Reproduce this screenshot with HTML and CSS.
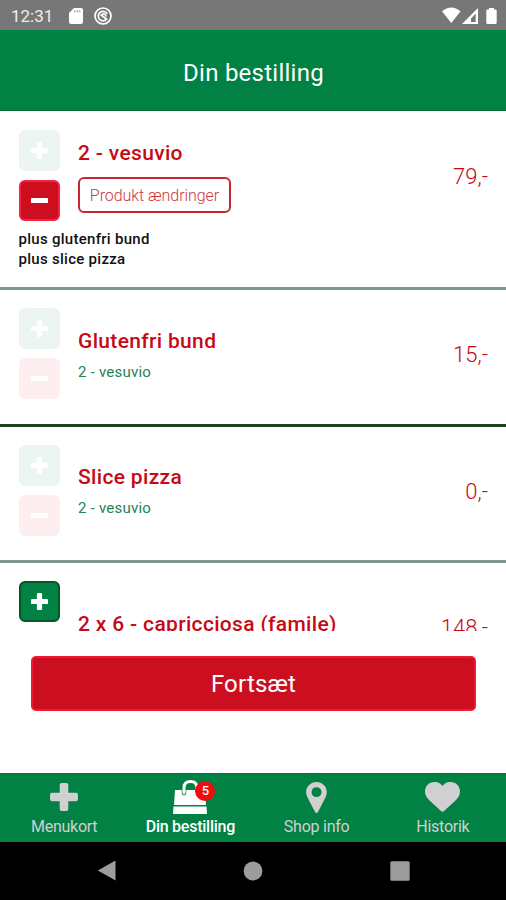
FILE: index.html
```html
<!DOCTYPE html>
<html lang="da">
<head>
<meta charset="utf-8">
<meta name="viewport" content="width=device-width, initial-scale=1">
<title>Din bestilling</title>
<link rel="stylesheet" href="styles.css">
</head>
<body>
<svg width="0" height="0" class="defs" aria-hidden="true">
  <symbol id="plus" viewBox="0 0 28 28"><path d="M11.700 0h4.600q2 0 2 2v7.700H26q2 0 2 2v4.600q0 2-2 2h-7.700V26q0 2-2 2h-4.600q-2 0-2-2v-7.700H2q-2 0-2-2v-4.600q0-2 2-2h7.700V2q0-2 2-2z"/></symbol>
  <symbol id="minus" viewBox="0 0 28 28"><rect y="9.700" width="28" height="8.600" rx="1.600"/></symbol>
</svg>
<div class="phone">
  <div class="status">
    <span class="clock">12:31</span>
    <svg class="sd" viewBox="0 0 14 16"><path d="M5 0h7q2 0 2 2v12q0 2-2 2H2q-2 0-2-2V5z"/><path class="slots" d="M5.800 2v2.500M8.300 2v2.500M10.800 2v2.500"/></svg>
    <svg class="radar" viewBox="0 0 18 18"><circle cx="9" cy="9" r="8"/><path d="M13 11.500A4.700 4.700 0 1 1 13.200 7M6.500 7.500l6.500 5M8 7q3.500-1 4 2.500"/></svg>
    <svg class="signals" viewBox="0 0 56 18"><path d="M0 4.300Q9.300-3.500 18.600 4.300L9.300 16z"/><path fill-rule="evenodd" d="M36 1v16H20zM33.700 6.500L29 11.500V15h4.700z"/><path d="M47 1h5v1.500h1.500q1.200 0 1.200 1.200v12q0 1.300-1.200 1.300h-8q-1.200 0-1.200-1.300v-12q0-1.200 1.200-1.200H47z"/></svg>
  </div>
  <header class="header"><h1>Din bestilling</h1></header>
  <main class="list">
    <article class="item tall">
      <div class="row">
        <div class="steps"><button class="step add off"><svg><use href="#plus"/></svg></button><button class="step sub"><svg><use href="#minus"/></svg></button></div>
        <div class="info"><h2>2 - vesuvio</h2><button class="change">Produkt ændringer</button></div>
        <span class="price">79,-</span>
      </div>
      <p class="extras">plus glutenfri bund<br>plus slice pizza</p>
    </article>
    <article class="item dark">
      <div class="row">
        <div class="steps"><button class="step add off"><svg><use href="#plus"/></svg></button><button class="step sub off"><svg><use href="#minus"/></svg></button></div>
        <div class="info"><h2>Glutenfri bund</h2><p class="parent">2 - vesuvio</p></div>
        <span class="price">15,-</span>
      </div>
    </article>
    <article class="item">
      <div class="row">
        <div class="steps"><button class="step add off"><svg><use href="#plus"/></svg></button><button class="step sub off"><svg><use href="#minus"/></svg></button></div>
        <div class="info"><h2>Slice pizza</h2><p class="parent">2 - vesuvio</p></div>
        <span class="price">0,-</span>
      </div>
    </article>
    <article class="item">
      <div class="row">
        <div class="steps"><button class="step add"><svg><use href="#plus"/></svg></button><button class="step sub"><svg><use href="#minus"/></svg></button></div>
        <div class="info single"><h2>2 x 6 - capricciosa (famile)</h2></div>
        <span class="price">148,-</span>
      </div>
    </article>
  </main>
  <div class="action"><button class="continue">Fortsæt</button></div>
  <nav class="tabs">
    <a class="tab"><span class="icon"><svg class="i-plus"><use href="#plus"/></svg></span><span>Menukort</span></a>
    <a class="tab active"><span class="icon"><svg class="i-bag" viewBox="0 0 36 36"><path d="M3 11h30l1 15H2zM1.500 27.500h33L35 35H1z"/><path class="gap" d="M10.200 11v3q0 2 1.800 2t1.800-2v-3"/><path class="handle" d="M12 14V9q0-6.500 6.500-6.500T25 9v5"/></svg><span class="badge">5</span></span><span>Din bestilling</span></a>
    <a class="tab"><span class="icon"><svg class="i-pin" viewBox="0 0 20 30"><path fill-rule="evenodd" d="M10 0C4.500 0 0 4.200 0 9.700c0 3 1.200 5.100 2.200 7L8.600 29q1.400 2 2.800 0l6.400-12.300c1-1.900 2.200-4 2.200-7C20 4.200 15.500 0 10 0zm0 5a4.800 4.800 0 1 1 0 9.600A4.800 4.800 0 0 1 10 5z"/></svg></span><span>Shop info</span></a>
    <a class="tab"><span class="icon"><svg class="i-heart" viewBox="0 0 35 30"><path d="M17.500 4C14.500 0 11.500 0 9.500 0 4 0 0 4 0 9.500c0 4 2 6.500 4.500 9L16 29q1.500 1.500 3 0l11.500-10.500c2.500-2.500 4.500-5 4.500-9C35 4 31 0 25.500 0c-2 0-5 0-8 4z"/></svg></span><span>Historik</span></a>
  </nav>
  <div class="system">
    <svg viewBox="0 0 20 22"><path d="M18.500.5v20L.8 10.500z"/></svg>
    <svg viewBox="0 0 20 22"><circle cx="10" cy="11" r="9.400"/></svg>
    <svg viewBox="0 0 20 22"><rect x=".3" y="1.300" width="19.400" height="19.400" rx="1.500"/></svg>
  </div>
</div>
</body>
</html>
```
FILE: styles.css
```css
* { box-sizing: border-box; }
body { margin: 0; font-family: Roboto, "Liberation Sans", sans-serif; background: #fff; }
h1, h2, p { margin: 0; font-weight: 500; }
button { font: inherit; padding: 0; margin: 0; }
svg { display: block; fill: currentColor; }
.defs { display: none; }
.phone { width: 506px; height: 900px; display: flex; flex-direction: column; overflow: hidden; }

.status { height: 30px; flex: none; background: #777; color: #fff; display: flex; align-items: center; padding: 1px 8px 0 11px; }
.clock { font-size: 17px; width: 58px; color: #eee; }
.sd { width: 14px; height: 16px; }
.slots { stroke: #999; stroke-width: 1; }
.radar { width: 18px; height: 18px; margin-left: 11px; fill: none; stroke: #fff; stroke-width: 1.7; }
.signals { width: 56px; height: 18px; margin-left: auto; }

.header { height: 81px; flex: none; background: #018143; border-bottom: 1px solid #016b2c; color: #fff; display: flex; align-items: center; justify-content: center; padding: 5px 0 0 1px; }
.header h1 { font-size: 24px; font-weight: 400; letter-spacing: .25px; }

.list { height: 520px; flex: none; overflow: hidden; }
.item { height: 136.5px; border-bottom: 3px solid #80958b; padding: 18px 18px 0 18.5px; }
.item.tall { height: 179px; padding-top: 19px; }
.item.dark { border-color: #20411f; }
.row { display: flex; align-items: center; height: 91px; }
.steps { display: flex; flex-direction: column; gap: 9px; width: 41px; }
.step { width: 41px; height: 41px; border-radius: 6px; border: 2px solid; display: flex; align-items: center; justify-content: center; }
.step svg { width: 17px; height: 17px; color: #fff; }
.add { background: #018143; border-color: #035823; }
.sub { background: #cc0e20; border-color: #f52340; }
.add.off { background: #edf5f1; border-color: #edf5f1; }
.sub.off { background: #fdeef0; border-color: #fdeef0; }
.info { flex: 1; margin-left: 18.500px; display: flex; flex-direction: column; align-items: flex-start; }
h2 { font-size: 21px; line-height: 28px; letter-spacing: .33px; color: #c60a15; white-space: nowrap; }
.single { padding-bottom: 5px; }
.change { width: 153px; height: 36px; margin-top: 10px; padding-top: 2px; background: #fff; border: 2px solid #c92632; border-radius: 6px; color: #cc3742; font-size: 16px; font-weight: 300; letter-spacing: -.05px; }
.price { font-size: 22px; font-weight: 300; color: #c60a15; padding-top: 2px; }
.parent { font-size: 15px; line-height: 20px; letter-spacing: .22px; margin-top: 7px; margin-bottom: -1px; color: #238353; font-weight: 400; }
.extras { font-size: 15px; line-height: 20.500px; letter-spacing: .28px; color: #111; margin-top: 7.500px; }

.action { flex: 1; padding: 24.500px 30px 0 31px; }
.continue { display: block; width: 100%; height: 55px; padding-top: 2px; background: #cb0f20; border: 2px solid #ee1a34; border-radius: 5px; color: #fff; font-size: 24px; letter-spacing: .2px; }

.tabs { height: 69px; flex: none; background: #018143; border-top: 1px solid #136c32; display: flex; color: #d0d0d0; padding-left: 1px; }
.tab { flex: 1; display: flex; flex-direction: column; align-items: center; font-size: 16px; line-height: 20px; letter-spacing: -.25px; }
.tab.active { color: #fff; font-weight: 500; }
.icon { height: 43px; display: flex; align-items: center; position: relative; padding-top: 5px; }
.i-plus { width: 28px; height: 28px; margin-bottom: 3px; }
.i-bag { width: 36px; height: 36px; margin-top: -2px; }
.handle { fill: none; stroke: #fff; stroke-width: 3; }
.gap { fill: none; stroke: #018143; stroke-width: 1; }
.i-pin { width: 21px; height: 31px; margin-top: -2px; }
.i-heart { width: 35px; height: 30px; margin-top: -2px; }
.badge { position: absolute; left: 23px; top: 7px; width: 20px; height: 20px; border-radius: 50%; background: #f50a0e; font-size: 13px; text-align: center; }

.system { height: 58px; flex: none; background: #000; display: grid; grid-template-columns: repeat(3, 146.500px); justify-content: center; justify-items: center; align-items: center; color: #9c9c9c; }
.system svg { width: 20px; height: 22px; }
```
